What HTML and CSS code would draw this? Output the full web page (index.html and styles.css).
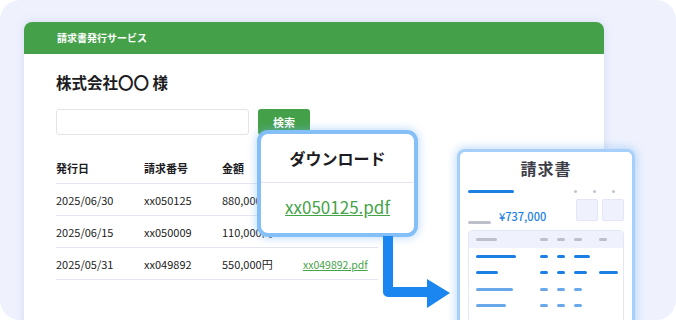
FILE: index.html
```html
<!DOCTYPE html>
<html lang="ja">
<head>
  <meta charset="UTF-8">
  <title>請求書発行サービス</title>
  <link rel="stylesheet" href="styles.css">
</head>
<body>
  <div class="frame">
    <div class="card">
      <div class="card-header">請求書発行サービス</div>
      <div class="card-body">
        <h1 class="company">株式会社〇〇 様</h1>
        <div class="search">
          <input class="search-input" type="text">
          <button class="search-button">検索</button>
        </div>
        <table class="invoice-table">
          <thead>
            <tr><th>発行日</th><th>請求番号</th><th>金額</th><th></th></tr>
          </thead>
          <tbody>
            <tr><td>2025/06/30</td><td>xx050125</td><td>880,000円</td><td></td></tr>
            <tr><td>2025/06/15</td><td>xx050009</td><td>110,000円</td><td></td></tr>
            <tr><td>2025/05/31</td><td>xx049892</td><td>550,000円</td><td><a href="#">xx049892.pdf</a></td></tr>
          </tbody>
        </table>
      </div>
    </div>

    <!-- download popup -->
    <div class="popup">
      <div class="popup-title">ダウンロード</div>
      <div class="popup-body"><a href="#">xx050125.pdf</a></div>
    </div>

    <svg class="arrow" width="72" height="80" viewBox="0 0 72 80">
      <path d="M8 4 V60 H50" fill="none" stroke="#1b86ef" stroke-width="10" stroke-linejoin="round"/>
      <polygon points="47,47 70,61 47,76" fill="#1b86ef"/>
    </svg>

    <!-- invoice preview -->
    <div class="invoice">
      <div class="invoice-title">請求書</div>
      <div class="invoice-top">
        <div class="invoice-left">
          <span class="bar bar-blue w46"></span>
          <div class="total">
            <span class="bar bar-gray w23"></span>
            <span class="total-amount">¥737,000</span>
          </div>
        </div>
        <div class="invoice-right">
          <div class="dots"><span></span><span></span><span></span></div>
          <div class="stamps"><span></span><span></span></div>
        </div>
      </div>
      <div class="mini-table">
        <div class="mini-row mini-head">
          <span class="bar bar-gray w21"></span>
          <span class="bar bar-gray w8"></span>
          <span class="bar bar-gray w8"></span>
          <span class="bar bar-gray w8"></span>
          <span class="bar bar-gray w8"></span>
        </div>
        <div class="mini-row">
          <span class="bar bar-blue w40"></span>
          <span class="bar bar-blue w8"></span>
          <span class="bar bar-blue w8"></span>
          <span class="bar bar-blue w16"></span>
          <span></span>
        </div>
        <div class="mini-row">
          <span class="bar bar-blue w22"></span>
          <span class="bar bar-blue w8"></span>
          <span class="bar bar-blue w8"></span>
          <span class="bar bar-blue w13"></span>
          <span class="bar bar-blue w19"></span>
        </div>
        <div class="mini-row">
          <span class="bar bar-light w37"></span>
          <span class="bar bar-light w8"></span>
          <span class="bar bar-light w8"></span>
          <span class="bar bar-light w8"></span>
          <span></span>
        </div>
        <div class="mini-row">
          <span class="bar bar-light w30"></span>
          <span class="bar bar-light w8"></span>
          <span class="bar bar-light w8"></span>
          <span class="bar bar-light w8"></span>
          <span></span>
        </div>
      </div>
    </div>
  </div>
</body>
</html>
```

FILE: styles.css
```css
:root {
  --green: #45a149;
  --link-green: #45a349;
  --blue: #1b7fe6;
  --text: #1c1c22;
  --line: #e4e6f0;
}

body {
  margin: 0;
  background: #ffffff;
  font-family: 'Noto Sans CJK JP', 'Noto Sans', sans-serif;
  color: var(--text);
}

.frame {
  position: relative;
  width: 676px;
  height: 320px;
  background: #eff2fd;
  border-radius: 20px;
  overflow: hidden;
  padding: 22px 0 0 24px;
  box-sizing: border-box;
}

.card {
  width: 580px;
  height: 320px;
  background: #ffffff;
  border-radius: 8px 8px 0 0;
  box-shadow: 0 0 10px rgba(120, 130, 200, 0.22);
  overflow: hidden;
}

.card-header {
  height: 32px;
  background: var(--green);
  color: #ffffff;
  font-size: 10px;
  font-weight: 700;
  line-height: 32px;
  padding-left: 33px;
}

.card-body {
  padding: 16px 0 0 32px;
}

.company {
  margin: 0;
  font-size: 15.5px;
  font-weight: 700;
  line-height: 24px;
}

.search {
  display: flex;
  gap: 9px;
  margin-top: 15px;
}

.search-input {
  width: 193px;
  height: 26px;
  box-sizing: border-box;
  border: 1px solid #e2e4ea;
  border-radius: 3px;
  margin: 0;
}

.search-button {
  width: 52px;
  height: 26px;
  border: none;
  border-radius: 3px;
  background: var(--green);
  color: #ffffff;
  font-family: inherit;
  font-size: 11px;
  font-weight: 700;
  padding: 0;
}

.invoice-table {
  margin-top: 17px;
  border-collapse: collapse;
  width: 322px;
  font-size: 11px;
}

.invoice-table th,
.invoice-table td {
  height: 31px;
  padding: 0;
  text-align: left;
  border-bottom: 1px solid var(--line);
}

.invoice-table th {
  font-weight: 700;
}

.invoice-table th:nth-child(1) { width: 88px; }
.invoice-table th:nth-child(2) { width: 78px; }
.invoice-table th:nth-child(3) { width: 81px; }

.invoice-table a {
  color: var(--link-green);
  font-size: 10.5px;
}

/* popup */
.popup {
  position: absolute;
  left: 261px;
  top: 134px;
  width: 153px;
  height: 99px;
  background: #ffffff;
  border-radius: 7px;
  box-shadow: 0 0 0 4px #84c0f7, 0 0 8px 5px rgba(110, 175, 245, 0.45);
}

.popup-title {
  height: 48px;
  line-height: 48px;
  text-align: center;
  font-size: 16px;
  font-weight: 700;
  border-bottom: 1px solid var(--line);
}

.popup-body {
  text-align: center;
  line-height: 48px;
}

.popup-body a {
  color: var(--link-green);
  font-size: 17px;
}

.arrow {
  position: absolute;
  left: 380px;
  top: 232px;
}

/* invoice preview */
.invoice {
  position: absolute;
  left: 460px;
  top: 152px;
  width: 172px;
  height: 200px;
  background: #ffffff;
  border-radius: 5px;
  box-shadow: 0 0 0 3px #a6d0fa, 0 0 8px 5px rgba(110, 175, 245, 0.4);
  padding: 0 8px 0 8px;
  box-sizing: border-box;
}

.invoice-title {
  text-align: center;
  font-size: 16px;
  font-weight: 700;
  color: #3d3e48;
  line-height: 22px;
  padding-top: 5px;
  letter-spacing: 1px;
}

.invoice-top {
  display: flex;
  justify-content: space-between;
  margin-top: 8px;
}

.invoice-left {
  display: flex;
  flex-direction: column;
  justify-content: space-between;
  padding-top: 3px;
  height: 34px;
}

.total {
  display: flex;
  align-items: flex-end;
  gap: 8px;
}

.total .bar {
  margin-bottom: 0;
}

.total-amount {
  color: var(--blue);
  font-size: 11px;
  font-weight: 500;
  line-height: 12px;
  margin-bottom: 2px;
}

.invoice-right {
  display: flex;
  flex-direction: column;
  align-items: flex-end;
  gap: 6px;
}

.dots {
  display: flex;
  gap: 16px;
  padding-top: 3px;
  padding-right: 9px;
}

.dots span {
  width: 3px;
  height: 3px;
  border-radius: 50%;
  background: #c0c3cf;
}

.stamps {
  display: flex;
  gap: 4px;
}

.stamps span {
  width: 20px;
  height: 20px;
  background: #eff2fd;
  border: 1px solid #e2e6f5;
  border-radius: 2px;
}

.mini-table {
  margin-top: 6px;
  border: 1px solid #e3e7f5;
  border-radius: 4px;
  height: 120px;
  overflow: hidden;
}

.mini-row {
  display: grid;
  grid-template-columns: 64px 17px 17px 25px auto;
  align-items: center;
  height: 16.5px;
  padding-left: 7px;
}

.mini-head {
  background: #eff2fd;
  height: 17px;
}

.bar {
  display: block;
  height: 3px;
  border-radius: 2px;
}

.bar-blue { background: var(--blue); }
.bar-gray { background: #bdc0cb; }
.bar-light { background: #6aa8ec; }

.w8 { width: 8px; }
.w13 { width: 13px; }
.w16 { width: 16px; }
.w19 { width: 19px; }
.w21 { width: 21px; }
.w22 { width: 22px; }
.w23 { width: 23px; }
.w30 { width: 30px; }
.w37 { width: 37px; }
.w40 { width: 40px; }
.w46 { width: 46px; }
```
